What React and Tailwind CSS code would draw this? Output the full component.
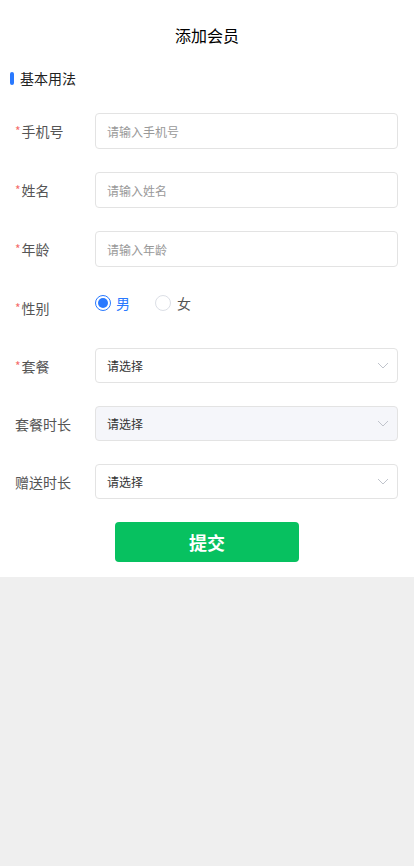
const font = { fontFamily: '"Noto Sans CJK SC", "Noto Sans", sans-serif' };

const Chevron = () => (
  <svg width="12" height="7" viewBox="0 0 12 7" fill="none" className="shrink-0">
    <path d="M1 1l5 5 5-5" stroke="#c0c4cc" strokeWidth="1" />
  </svg>
);

const Label = ({ text, required }) => (
  <div className="w-[80px] shrink-0 flex items-center text-[14px] text-[#555] leading-none">
    {required ? <span className="text-[#f56c6c] text-[12px] mr-px">*</span> : null}
    <span>{text}</span>
  </div>
);

const TextRow = ({ label, placeholder }) => (
  <div className="flex items-center mb-[23px]">
    <Label text={label} required />
    <input
      className="flex-1 h-[36px] border border-[#e3e3e3] rounded-[4px] px-[11px] text-[12px] text-[#333] placeholder:text-[#999] outline-none"
      placeholder={placeholder}
    />
  </div>
);

const SelectRow = ({ label, required, disabled }) => (
  <div className="flex items-center mb-[23px]">
    <Label text={label} required={required} />
    <div
      className={
        'flex-1 h-[35px] border border-[#e3e3e3] rounded-[4px] pl-[11px] pr-[8px] flex items-center justify-between ' +
        (disabled ? 'bg-[#f5f6fa]' : 'bg-white')
      }
    >
      <span className="text-[12px] text-[#333]">请选择</span>
      <Chevron />
    </div>
  </div>
);

export default function App() {
  return (
    <div className="min-h-[866px] bg-[#efefef]" style={font}>
      <div className="bg-white pb-[15px]">
        <div className="h-[69px] flex items-center justify-center text-[16px] text-black">添加会员</div>
        <div className="h-[16px] mt-px flex items-center pl-[10px] gap-[6px]">
          <div className="w-[4px] h-[13px] rounded-full bg-[#2979ff]" />
          <span className="text-[14px] text-[#222]">基本用法</span>
        </div>

        <div className="pl-[15px] pr-[16px] pt-[27px]">
          <TextRow label="手机号" placeholder="请输入手机号" />
          <TextRow label="姓名" placeholder="请输入姓名" />
          <TextRow label="年龄" placeholder="请输入年龄" />

          <div className="flex h-[35px] mb-[23px]">
            <Label text="性别" required />
            <div className="flex items-start pt-[5px] gap-[25px]">
              <div className="flex items-center gap-[5px]">
                <div className="w-[16px] h-[16px] rounded-full border border-[#2979ff] flex items-center justify-center">
                  <div className="w-[10px] h-[10px] rounded-full bg-[#2979ff]" />
                </div>
                <span className="text-[14px] text-[#2979ff] leading-none">男</span>
              </div>
              <div className="flex items-center gap-[6px]">
                <div className="w-[16px] h-[16px] rounded-full border border-[#dcdfe6]" />
                <span className="text-[14px] text-[#555] leading-none">女</span>
              </div>
            </div>
          </div>

          <SelectRow label="套餐" required />
          <SelectRow label="套餐时长" disabled />
          <SelectRow label="赠送时长" />
        </div>

        <div className="flex justify-center">
          <button className="w-[184px] h-[40px] rounded-[4px] bg-[#07c160] text-white text-[18px] font-bold">提交</button>
        </div>
      </div>
    </div>
  );
}
